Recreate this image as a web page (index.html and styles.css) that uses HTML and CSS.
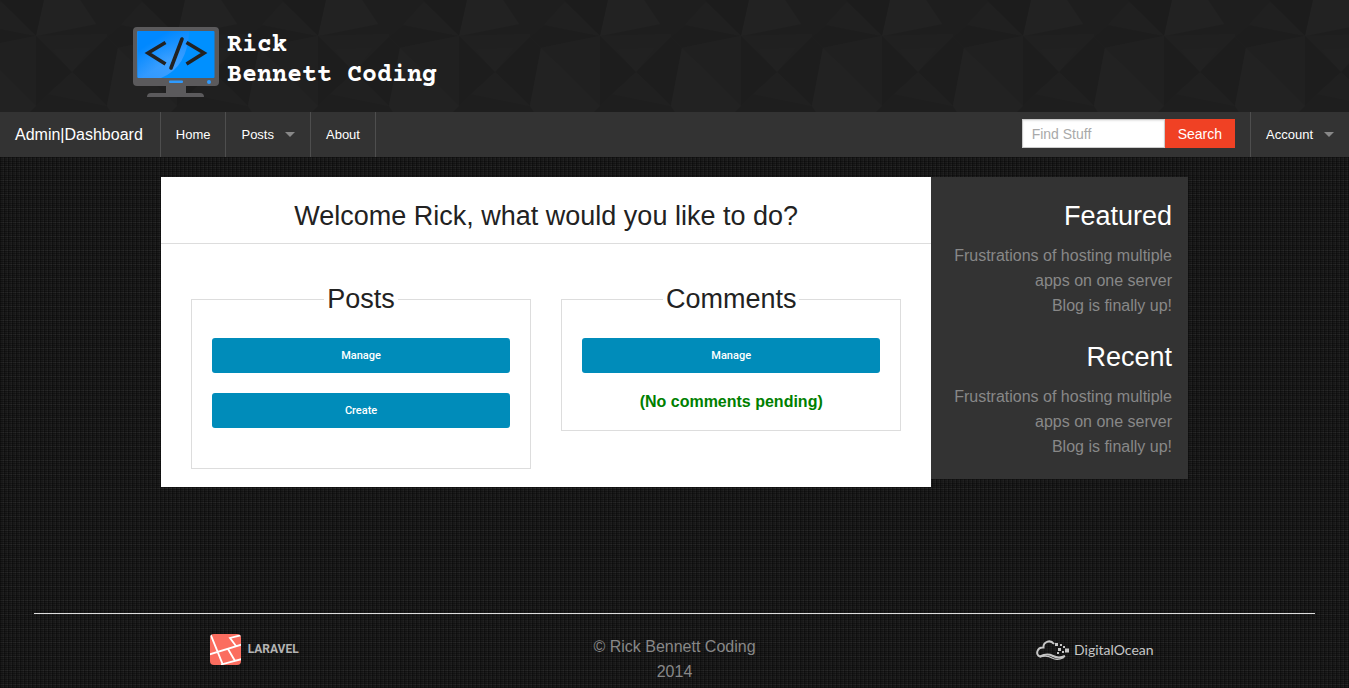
FILE: index.html
```
<!DOCTYPE html>
<html lang="en">
<head>
<meta charset="utf-8">
<meta name="viewport" content="width=device-width, initial-scale=1">
<title>Admin|Dashboard</title>
<link rel="stylesheet" href="styles.css">
</head>
<body>
<header class="banner">
  <svg class="banner-bg" aria-hidden="true">
    <defs>
      <g id="facets">
        <path fill="#222222" d="M44 0L36 36L96 24L80 0z"/>
        <path fill="#1c1c1c" d="M0 0L36 36L44 0z"/>
        <path fill="#202020" d="M1 2L-20 25L36 36z"/>
        <path fill="#1d1d1d" d="M-20 25L36 36L-23 48L-34 37z"/>
        <path fill="#202020" d="M36 36L107 34V37L72 72z"/>
        <path fill="#212121" d="M53 50L90 48L72 72z"/>
        <path fill="#202020" d="M-23 48L36 36V106z"/>
        <path fill="#222222" d="M-23 48L36 106L30 112H-30L-34 106z"/>
        <path fill="#1d1d1d" d="M72 72L107 37L118 48L107 106z"/>
        <path fill="#202020" d="M72 72L107 106L48 94z"/>
        <path fill="#1d1d1d" d="M36 36L72 72L48 94L36 106z"/>
      </g>
      <pattern id="tile" width="141" height="112" patternUnits="userSpaceOnUse">
        <rect width="141" height="112" fill="#1e1e1e"/>
        <use href="#facets"/>
        <use href="#facets" x="141"/>
      </pattern>
    </defs>
    <rect width="100%" height="100%" fill="url(#tile)"/>
  </svg>
  <a class="brand" href="#">
    <svg class="brand-icon" viewBox="0 0 86 70" aria-hidden="true">
      <defs>
        <linearGradient id="shine" x1="0" y1="1" x2="1" y2="0"><stop offset="0" stop-color="#2f98ff"/><stop offset=".5" stop-color="#3da0ff"/><stop offset="1" stop-color="#1a90ff"/></linearGradient>
        <linearGradient id="corner" x1="0" y1="0" x2=".5" y2=".7"><stop offset="0" stop-color="#0088ff"/><stop offset=".4" stop-color="#0088ff"/><stop offset="1" stop-color="#0088ff" stop-opacity="0"/></linearGradient>
      </defs>
      <path fill="#5b5a5c" d="M4 0h78q4 0 4 4v51q0 4-4 4H53v7h14q4 0 4 4H14q0-4 4-4h15v-7H4q-4 0-4-4V4q0-4 4-4z"/>
      <rect x="4.500" y="4" width="77" height="47" rx="1" fill="#0090ff"/>
      <path fill="url(#shine)" d="M5.500 4H56Q55 40 28 51H5.500q-1 0-1-1V5q0-1 1-1z"/>
      <path fill="url(#corner)" d="M5.500 4H56Q55 40 28 51H5.500q-1 0-1-1V5q0-1 1-1z"/>
      <g fill="none" stroke="#222" stroke-width="3.600"><path d="M32.500 15.500L15 26l17.500 11M53.500 15.500L71 26 53.500 37"/><path stroke-linecap="round" d="M49 12L38 41"/></g>
      <rect x="36" y="53.500" width="14" height="2.500" rx="1" fill="#2e9bff"/>
      <circle cx="76" cy="55" r="2" fill="#2e9bff"/>
    </svg>
    <span class="brand-name">Rick<br>Bennett Coding</span>
  </a>
</header>

<nav class="topbar">
  <a class="topbar-title" href="#">Admin|Dashboard</a>
  <ul class="menu menu-left">
    <li><a href="#">Home</a></li>
    <li><a class="has-dropdown" href="#">Posts</a></li>
    <li><a href="#">About</a></li>
  </ul>
  <form class="search">
    <input type="text" placeholder="Find Stuff" aria-label="Find Stuff">
    <button type="button">Search</button>
  </form>
  <ul class="menu">
    <li><a class="has-dropdown" href="#">Account</a></li>
  </ul>
</nav>

<div class="page">
  <main class="panel">
    <h1 class="welcome">Welcome Rick, what would you like to do?</h1>
    <div class="groups">
      <fieldset>
        <legend>Posts</legend>
        <button class="action" type="button">Manage</button>
        <button class="action" type="button">Create</button>
      </fieldset>
      <fieldset>
        <legend>Comments</legend>
        <button class="action" type="button">Manage</button>
        <p class="pending">(No comments pending)</p>
      </fieldset>
    </div>
  </main>
  <aside class="sidebar">
    <h2>Featured</h2>
    <ul>
      <li><a href="#">Frustrations of hosting multiple apps on one server</a></li>
      <li><a href="#">Blog is finally up!</a></li>
    </ul>
    <h2>Recent</h2>
    <ul>
      <li><a href="#">Frustrations of hosting multiple apps on one server</a></li>
      <li><a href="#">Blog is finally up!</a></li>
    </ul>
  </aside>
</div>

<footer class="footer">
  <div class="credits">
    <a class="laravel" href="#">
      <svg viewBox="0 0 31 31" aria-hidden="true">
        <clipPath id="badge"><rect width="31" height="31" rx="4"/></clipPath>
        <g clip-path="url(#badge)"><rect width="31" height="31" fill="#fb6d5f"/>
        <path fill="none" stroke="#fff" stroke-width="1.800" d="M0-1L13 31M-1 20.500L32 10.500M11 30.500L32 25M18 15L25 27M32 1L20 4L26 12M20 4"/></g>
      </svg>
      <span>LARAVEL</span>
    </a>
    <p>© Rick Bennett Coding<br>2014</p>
    <a class="ocean" href="#">
      <svg viewBox="0 0 34 20" aria-hidden="true">
        <path fill="none" stroke="#c6c6c6" stroke-width="2" d="M18 4C14-1 7 2 7.500 7.500C1 7-1 15 4 16.500Q11 13 17 16T29 16"/>
        <path fill="none" stroke="#c6c6c6" stroke-width="1.200" d="M4 17Q11 15 16 18T28 17.500"/>
        <path fill="#c6c6c6" d="M19 3h3v3h-3zM24 4h2v2h-2zM22 8h3v3h-3zM27 6h2v2h-2zM21 12h2v2h-2zM26 11h2v2h-2zM29 8.500h4v4h-4z"/>
      </svg>
      <span>DigitalOcean</span>
    </a>
  </div>
</footer>
</body>
</html>
```
FILE: styles.css
```
* {
  box-sizing: border-box;
}

body {
  margin: 0;
  min-height: 100vh;
  display: flex;
  flex-direction: column;
  font: 16px/25px "Liberation Sans", Arial, sans-serif;
  color: #222;
  background-color: #1a1a1a;
  background-image:
    repeating-linear-gradient(0deg, rgba(0, 0, 0, .3) 0 1px, transparent 1px 2px),
    repeating-linear-gradient(90deg, rgba(0, 0, 0, .3) 0 1px, transparent 1px 3px, rgba(255, 255, 255, .03) 3px 4px),
    repeating-linear-gradient(0deg, transparent 0 3px, rgba(255, 255, 255, .03) 3px 4px, transparent 4px 7px);
}

a {
  color: inherit;
  text-decoration: none;
}

ul, h1, h2, p {
  margin: 0;
  padding: 0;
  list-style: none;
  font-weight: normal;
}

button, input {
  font-family: inherit;
  border-radius: 0;
}

.banner {
  position: relative;
  padding: 27px 133px 15px;
}

.banner-bg {
  position: absolute;
  inset: 0;
  width: 100%;
  height: 100%;
}

.brand {
  position: relative;
  display: flex;
  gap: 8px;
}

.brand-icon {
  width: 86px;
  height: 70px;
}

.brand-name {
  color: #fff;
  font: bold 25px/30px "Courier Prime", "Liberation Mono", monospace;
  padding-top: 4px;
}

.topbar {
  display: flex;
  align-items: center;
  background: #333;
  color: #fff;
  line-height: 45px;
}

.topbar-title {
  padding: 0 17px 0 15px;
  font-size: 16px;
}

.menu {
  display: flex;
  font-size: 13px;
}

.menu-left {
  margin-right: auto;
  border-right: 1px solid #4e4e4e;
}

.menu a {
  display: flex;
  align-items: center;
  gap: 11px;
  padding: 0 15px;
  border-left: 1px solid #4e4e4e;
}

.has-dropdown::after {
  content: "";
  border: 5px solid transparent;
  border-top-color: #888;
  border-bottom: 0;
}

.search {
  display: flex;
  padding: 0 15px 2px 0;
}

.search input {
  width: 143px;
  height: 29px;
  padding: 0 9px;
  border: 1px solid #ccc;
  box-shadow: inset 0 1px 2px rgba(0, 0, 0, .1);
  font-size: 14px;
}

.search input::placeholder {
  color: #a9a9a9;
}

.search button {
  height: 29px;
  padding: 0 13px;
  border: 0;
  background: #f04124;
  color: #fff;
  font-size: 14px;
}

.page {
  width: 100%;
  max-width: 1027px;
  margin: 20px auto;
  display: grid;
  grid-template-columns: 3fr 1fr;
  align-items: start;
}

.panel {
  background: #fff;
}

.welcome, .sidebar h2, legend {
  font-size: 27px;
  line-height: 38px;
}

.welcome {
  padding: 20px 0 8px;
  border-bottom: 1px solid #ddd;
  text-align: center;
}

.groups {
  display: grid;
  grid-template-columns: 1fr 1fr;
  gap: 30px;
  align-items: start;
  padding: 36px 30px 18px;
}

fieldset {
  min-width: 0;
  margin: 0;
  padding: 20px;
  border: 1px solid #ddd;
}

legend {
  margin: 0 auto;
  padding: 0 3px;
}

.action {
  display: block;
  width: 100%;
  height: 35px;
  margin-bottom: 20px;
  border: 0;
  border-radius: 3px;
  background: #008cba;
  color: #fff;
  font-size: 11px;
  font-family: Roboto, sans-serif;
  font-weight: 500;
}

.pending {
  color: green;
  font-weight: bold;
  line-height: 17px;
  text-align: center;
}

.sidebar {
  padding: 20px 16px 20px 15px;
  background: #333;
  color: #888;
  text-align: right;
}

.sidebar h2 {
  margin-bottom: 8px;
  color: #fff;
}

.sidebar ul + h2 {
  margin-top: 20px;
}

.footer {
  margin: auto 34px 4px;
  padding: 20px 10px 0;
  border-top: 1px solid #ddd;
  color: #888;
}

.credits {
  display: grid;
  grid-template-columns: repeat(3, 1fr);
  text-align: center;
}

.laravel, .ocean {
  display: flex;
  align-items: center;
  justify-content: center;
  height: 31px;
}

.laravel {
  gap: 7px;
  color: #b4b4b4;
  font: bold 12px/31px "Liberation Sans Narrow", Roboto, sans-serif;
}

.laravel svg {
  width: 31px;
  height: 31px;
}

.ocean {
  gap: 4px;
  color: #c6c6c6;
  font: 14px/31px Lato, sans-serif;
}

.ocean svg {
  width: 34px;
  height: 20px;
}
```
